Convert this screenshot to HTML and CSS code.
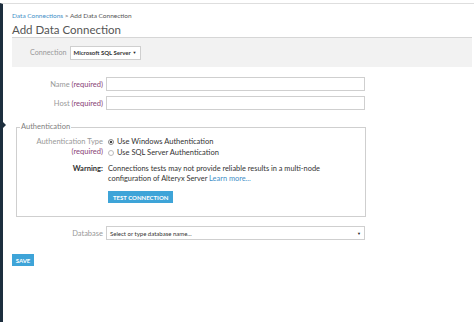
FILE: index.html
```html
<!DOCTYPE html>
<html lang="en">
<head>
  <meta charset="UTF-8" />
  <title>Add Data Connection</title>
  <link rel="stylesheet" href="styles.css">
</head>
<body>
  <div class="app">
    <span class="pointer"></span>
    <div class="page">
      <div class="crumbs"><a href="#">Data Connections</a> &gt; Add Data Connection</div>
      <h1>Add Data Connection</h1>

      <div class="panel">
        <span class="panel-label">Connection</span>
        <div class="select small">Microsoft SQL Server <span class="caret">▼</span></div>
      </div>

      <div class="rows">
        <div class="row">
          <label>Name <span class="req">(required)</span></label>
          <div class="input"></div>
        </div>
        <div class="row">
          <label>Host <span class="req">(required)</span></label>
          <div class="input"></div>
        </div>
      </div>

      <fieldset class="auth">
        <legend>Authentication</legend>
        <div class="row top">
          <label>Authentication Type<br><span class="req">(required)</span></label>
          <div class="radios">
            <div class="radio"><span class="dot on"></span>Use Windows Authentication</div>
            <div class="radio"><span class="dot"></span>Use SQL Server Authentication</div>
          </div>
        </div>
        <div class="row top warn">
          <label class="strong">Warning:</label>
          <p>Connections tests may not provide reliable results in a multi-node<br>configuration of Alteryx Server <a href="#">Learn more...</a></p>
        </div>
        <div class="row top">
          <label></label>
          <button class="btn">TEST CONNECTION</button>
        </div>
      </fieldset>

      <div class="row db">
        <label>Database</label>
        <div class="select wide">Select or type database name... <span class="caret">▼</span></div>
      </div>

      <button class="btn save">SAVE</button>
    </div>
  </div>
</body>
</html>
```

FILE: styles.css
```css
html, body {
  margin: 0;
  padding: 0;
  background: #fff;
}

body {
  font-family: Lato, 'Open Sans', sans-serif;
  color: #444;
  padding-top: 3px;
}

.app {
  position: relative;
  border-top: 1px solid #dedede;
  border-left: 3px solid #1d2e3e;
  min-height: calc(100vh - 4px);
}

/* small arrow on the left rail */
.pointer {
  position: absolute;
  left: 0;
  top: 118px;
  width: 0;
  height: 0;
  border-top: 3px solid transparent;
  border-bottom: 3px solid transparent;
  border-left: 3px solid #1d2e3e;
}

.page {
  padding: 7px 2px 0 9px;
}

a {
  color: #3f8fc7;
  text-decoration: none;
}

.crumbs {
  font-size: 6.5px;
  line-height: 10px;
  color: #555;
}

h1 {
  margin: 2px 0 0 0;
  font-size: 11.5px;
  line-height: 14px;
  font-weight: 400;
  color: #555;
}

.panel {
  height: 29px;
  border-top: 1px solid #d6d6d6;
  background: #f2f2f2;
  display: flex;
  align-items: center;
  padding-left: 18px;
}

.panel-label {
  font-size: 7.2px;
  color: #999;
  margin-right: 3px;
}

.select {
  box-sizing: border-box;
  height: 14px;
  border: 1px solid #cfcfcf;
  background: #fff;
  font-size: 6px;
  color: #333;
  display: flex;
  align-items: center;
  padding: 0 3px;
}

.select.small {
  width: 71px;
  font-weight: 700;
}

.select.wide {
  width: 259px;
}

.caret {
  margin-left: auto;
  font-size: 4px;
  color: #222;
}

.rows {
  margin-top: 10px;
  display: flex;
  flex-direction: column;
  gap: 5px;
}

.row {
  display: flex;
  align-items: center;
}

.row label {
  width: 91px;
  margin-right: 3px;
  text-align: right;
  font-size: 7.5px;
  color: #999;
  flex-shrink: 0;
}

.req {
  color: #8a3f76;
}

.input {
  box-sizing: border-box;
  width: 259px;
  height: 14px;
  border: 1px solid #cfcfcf;
  background: #fff;
}

.auth {
  margin: 13px 0 0 4px;
  width: 350px;
  box-sizing: border-box;
  border: 1px solid #cfcfcf;
  padding: 6px 0 13px 0;
}

.auth legend {
  font-size: 7.5px;
  color: #808080;
  padding: 0 1px;
  margin-left: 3px;
  line-height: 8px;
}

.auth .row label {
  width: 86px;
  margin-right: 5px;
  line-height: 9.5px;
}

.row.top {
  align-items: flex-start;
}

.radios {
  display: flex;
  flex-direction: column;
  gap: 1px;
  font-size: 7.5px;
  color: #333;
}

.radio {
  display: flex;
  align-items: center;
  line-height: 10px;
}

.dot {
  width: 4px;
  height: 4px;
  border: 1px solid #bbb;
  border-radius: 50%;
  margin-right: 3px;
  background: #fff;
}

.dot.on {
  background: radial-gradient(circle, #444 0 1.3px, #fff 1.6px);
  border-color: #888;
}

.warn {
  margin-top: 6px;
}

.auth .row label.strong {
  color: #333;
  font-weight: 700;
}

.warn p {
  margin: 0;
  font-size: 7.4px;
  line-height: 9.5px;
  color: #333;
}

.btn {
  border: none;
  background: #3ea4d8;
  color: #fff;
  font-family: Lato, 'Open Sans', sans-serif;
  font-size: 6px;
  font-weight: 700;
  height: 12px;
  padding: 0 5px;
  margin-top: 8px;
  cursor: pointer;
}

.db {
  margin-top: 9px;
}

.save {
  display: block;
  margin-top: 14px;
  width: 22px;
  padding: 0;
}
```
